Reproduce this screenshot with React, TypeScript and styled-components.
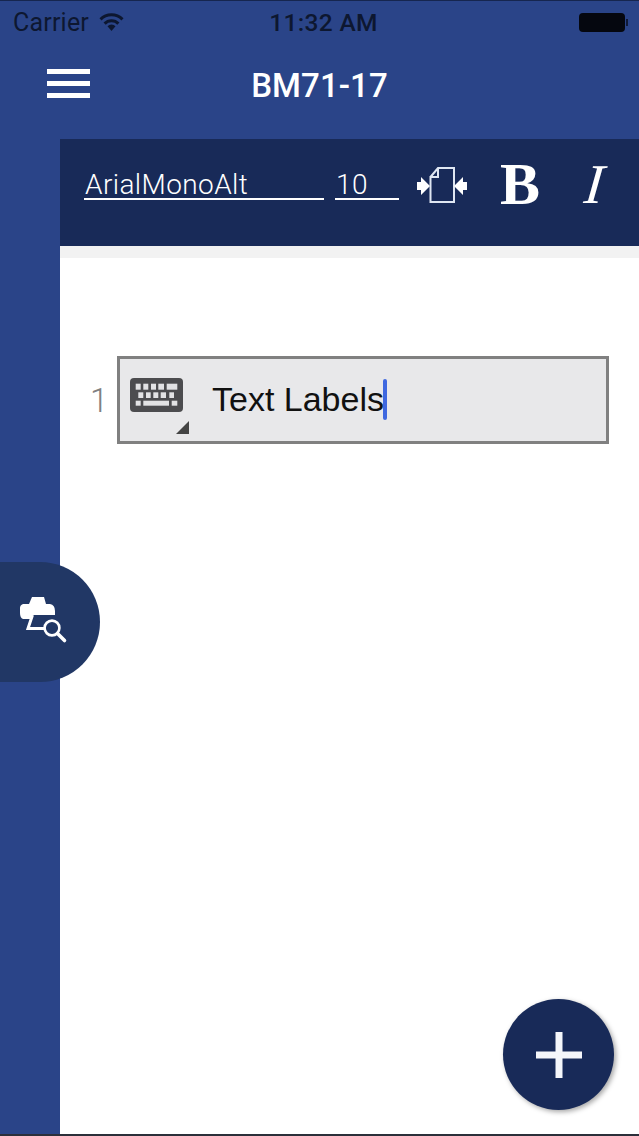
import React from "react";
import styled, { createGlobalStyle } from "styled-components";

const Global = createGlobalStyle`
  html, body { margin: 0; padding: 0; background: #fff; }
  * { box-sizing: border-box; }
  body { font-family: "Roboto", "Liberation Sans", sans-serif; }
`;

const Screen = styled.div`
  position: relative;
  width: 639px;
  height: 1136px;
  overflow: hidden;
  display: flex;
  flex-direction: column;
  background: #fff;
  border-top: 1px solid #16264f;
  border-bottom: 2px solid #2b2f3a;
`;

const Header = styled.header`
  flex: none;
  height: 138px;
  background: #2a4488;
  display: flex;
  flex-direction: column;
`;

const StatusBar = styled.div`
  height: 42px;
  padding: 0 12px 0 13px;
  display: grid;
  grid-template-columns: 1fr auto 1fr;
  align-items: center;
  color: #0d1730;
  font-size: 25px;
`;

const StatusLeft = styled.div`
  display: flex;
  align-items: center;
  gap: 10px;
  letter-spacing: 0.2px;
`;

const Clock = styled.div`
  margin-left: 7px;
  font-size: 24.5px;
  font-weight: 500;
  letter-spacing: 0.3px;
`;

const Battery = styled.div`
  justify-self: end;
  width: 46px;
  height: 19px;
  margin-right: 2px;
  border-radius: 4px;
  background: #05070f;
  position: relative;
  &::after {
    content: "";
    position: absolute;
    right: -3px;
    top: 6px;
    width: 2px;
    height: 7px;
    background: #101a38;
  }
`;

const NavBar = styled.div`
  position: relative;
  height: 82px;
  display: flex;
  align-items: center;
  justify-content: center;
`;

const Title = styled.h1`
  margin: 3px 0 0;
  color: #fff;
  font-size: 33px;
  font-weight: 500;
  letter-spacing: 0.1px;
`;

const Burger = styled.button`
  position: absolute;
  left: 47px;
  top: 26px;
  width: 43px;
  height: 29px;
  padding: 0;
  border: 0;
  background: transparent;
  display: flex;
  flex-direction: column;
  justify-content: space-between;
  & > span {
    display: block;
    height: 5px;
    background: #fff;
  }
`;

const Body = styled.div`
  flex: 1;
  display: flex;
  min-height: 0;
`;

const Rail = styled.aside`
  flex: none;
  width: 60px;
  background: #2a4488;
`;

const Main = styled.main`
  flex: 1;
  display: flex;
  flex-direction: column;
`;

const Toolbar = styled.div`
  flex: none;
  height: 107px;
  background: #182a58;
  color: #fff;
  display: flex;
  align-items: flex-start;
  padding: 30px 0 0 24px;
`;

const Select = styled.div<{ $w: number; $mr: number }>`
  width: ${(p) => p.$w}px;
  margin-right: ${(p) => p.$mr}px;
  height: 31px;
  border-bottom: 2px solid #fff;
  font-size: 28px;
  font-weight: 300;
  letter-spacing: 0.4px;
  line-height: 31px;
  white-space: nowrap;
  padding-left: 1px;
`;

const ToolIcon = styled.svg`
  display: block;
  margin: -4px 0 0 18px;
  flex: none;
`;

const BoldGlyph = styled.span`
  font-family: "Liberation Serif", serif;
  font-weight: 700;
  font-size: 60px;
  line-height: 30px;
  margin: 0 0 0 31px;
  height: 30px;
`;

const ItalicGlyph = styled.span`
  font-family: "Liberation Serif", serif;
  font-style: italic;
  font-size: 56px;
  line-height: 30px;
  margin-left: 45px;
  height: 30px;
  transform: skewX(-6deg);
`;

const Strip = styled.div`
  flex: none;
  height: 12px;
  background: #f2f2f2;
`;

const Content = styled.div`
  flex: 1;
  padding: 98px 30px 0 30px;
`;

const Row = styled.div`
  display: flex;
  align-items: center;
`;

const LineNo = styled.div`
  width: 27px;
  color: #808080;
  font-size: 33px;
  font-weight: 300;
`;

const Field = styled.div`
  position: relative;
  flex: 1;
  height: 88px;
  border: 3px solid #808080;
  background: #e8e8ea;
  display: flex;
  align-items: center;
  padding: 0 0 2px 10px;
`;

const Keyboard = styled.svg`
  display: block;
  flex: none;
  margin-bottom: 8px;
`;

const Corner = styled.div`
  position: absolute;
  left: 56px;
  bottom: 7px;
  width: 0;
  height: 0;
  border-style: solid;
  border-width: 0 0 13px 13px;
  border-color: transparent transparent #444 transparent;
`;

const FieldText = styled.div`
  margin-left: 29px;
  font-family: "Liberation Sans", sans-serif;
  font-size: 34px;
  color: #111;
  white-space: nowrap;
  display: flex;
  align-items: center;
`;

const Caret = styled.span`
  display: inline-block;
  width: 4px;
  height: 41px;
  margin-left: -1px;
  background: #3f68e0;
  border-radius: 2px;
`;

const PreviewTab = styled.button`
  position: absolute;
  left: 0;
  top: 561px;
  width: 100px;
  height: 120px;
  padding: 0 0 0 19px;
  border: 0;
  border-radius: 0 60px 60px 0;
  background: #213765;
  display: flex;
  align-items: center;
`;

const Fab = styled.button`
  position: absolute;
  left: 503px;
  top: 998px;
  width: 111px;
  height: 111px;
  padding: 0;
  border: 0;
  border-radius: 50%;
  background: #182a58;
  box-shadow: 2px 2px 5px rgba(0, 0, 0, 0.35);
  display: flex;
  align-items: center;
  justify-content: center;
`;

export default function App() {
  return (
    <Screen>
      <Global />
      <Header>
        <StatusBar>
          <StatusLeft>
            Carrier
            <svg width="25" height="18" viewBox="0 0 25 18">
              <path d="M1.5 6.4a15.6 15.6 0 0 1 22 0" fill="none" stroke="#0d1730" strokeWidth="3" />
              <path d="M5.6 10.6a9.6 9.6 0 0 1 13.8 0" fill="none" stroke="#0d1730" strokeWidth="3" />
              <path d="M8.5 13.2 12.5 18 16.5 13.2a5.6 5.6 0 0 0-8 0z" fill="#0d1730" />
            </svg>
          </StatusLeft>
          <Clock>11:32 AM</Clock>
          <Battery />
        </StatusBar>
        <NavBar>
          <Burger aria-label="Menu">
            <span />
            <span />
            <span />
          </Burger>
          <Title>BM71-17</Title>
        </NavBar>
      </Header>
      <Body>
        <Rail />
        <Main>
          <Toolbar>
            <Select $w={240} $mr={11}>ArialMonoAlt</Select>
            <Select $w={64} $mr={0}>10</Select>
            <ToolIcon width="52" height="40" viewBox="0 0 52 40">
              <path d="M13.5 12 21 3H37V37H13.5V12H21V3" fill="none" stroke="#dfe6f2" strokeWidth="2" />
              <path d="M0 17H4V12L13 21 4 30V25H0Z" fill="#fff" />
              <path d="M50 17H46V12L37 21 46 30V25H50Z" fill="#fff" />
            </ToolIcon>
            <BoldGlyph>B</BoldGlyph>
            <ItalicGlyph>I</ItalicGlyph>
          </Toolbar>
          <Strip />
          <Content>
            <Row>
              <LineNo>1</LineNo>
              <Field>
                <Keyboard width="53" height="34" viewBox="0 0 53 34">
                  <rect width="53" height="34" rx="4" fill="#4c4c4f" />
                  <g fill="#e2e2e4">
                    <rect x="5.7" y="5.7" width="5" height="6" />
                    <rect x="13.3" y="5.7" width="5" height="6" />
                    <rect x="21" y="5.7" width="5" height="6" />
                    <rect x="28.3" y="5.7" width="5.7" height="6" />
                    <rect x="36.7" y="5.7" width="10.6" height="6" />
                    <rect x="8.3" y="14.3" width="5" height="5.7" />
                    <rect x="16" y="14.3" width="4.7" height="5.7" />
                    <rect x="23.3" y="14.3" width="5" height="5.7" />
                    <rect x="30.7" y="14.3" width="5.3" height="5.7" />
                    <rect x="39.3" y="14.3" width="4.7" height="5.7" />
                    <rect x="5.7" y="22.7" width="5" height="5" />
                    <rect x="13.3" y="22.7" width="25.7" height="5" />
                    <rect x="41.7" y="22.7" width="5.6" height="5" />
                  </g>
                </Keyboard>
                <Corner />
                <FieldText>
                  Text Labels
                  <Caret />
                </FieldText>
              </Field>
            </Row>
          </Content>
        </Main>
      </Body>
      <PreviewTab aria-label="Print preview">
        <svg width="50" height="52" viewBox="0 0 50 52">
          <path d="M13 1H25L27 8H10Z" fill="#fff" />
          <path d="M4 8H31Q36 9 36 15V19H13L11 23H4Q1 22 1 17V12Q1 9 4 8Z" fill="#fff" />
          <path d="M13.5 19 9 32.5H25" fill="none" stroke="#fff" strokeWidth="3" />
          <circle cx="33" cy="32" r="7.4" fill="#213765" stroke="#fff" strokeWidth="2.6" />
          <path d="M38.5 37.5 45.5 44.5" stroke="#fff" strokeWidth="3.6" strokeLinecap="round" />
        </svg>
      </PreviewTab>
      <Fab aria-label="Add">
        <svg width="46" height="46" viewBox="0 0 46 46">
          <path d="M19.5 0h7v19.5H46v7H26.5V46h-7V26.5H0v-7h19.5z" fill="#f4f6fa" />
        </svg>
      </Fab>
    </Screen>
  );
}
